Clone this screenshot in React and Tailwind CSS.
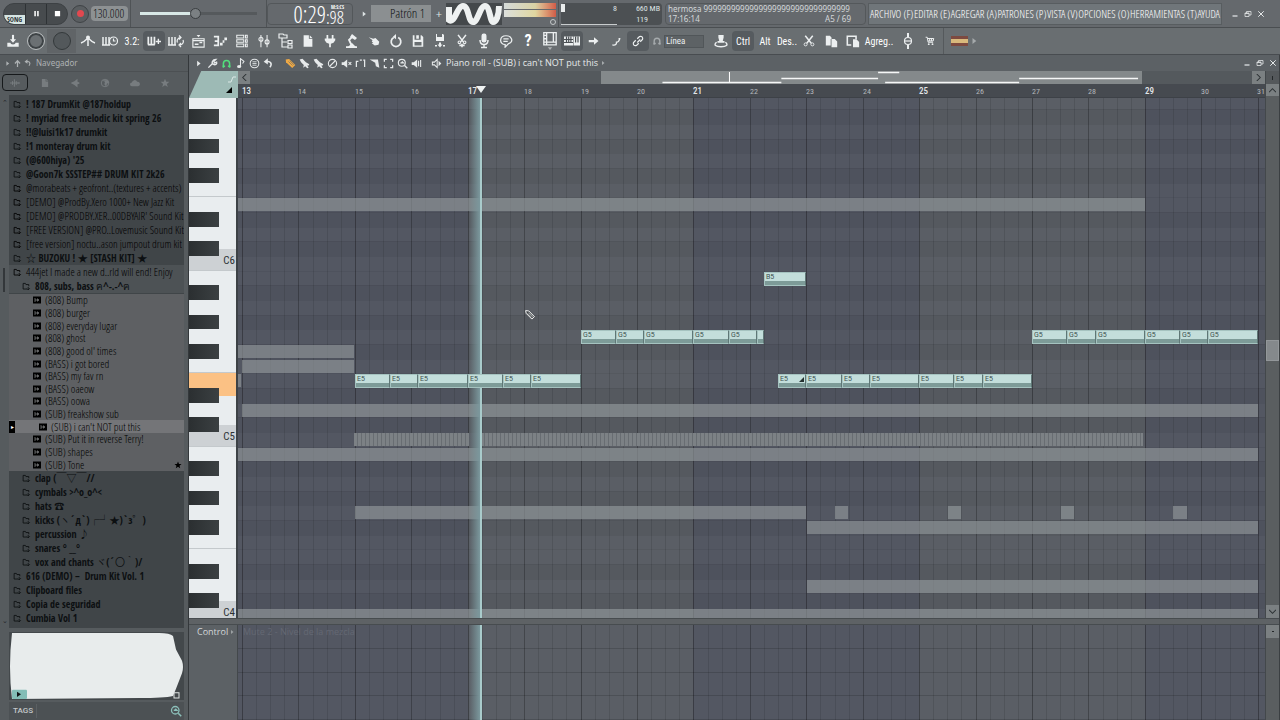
import React, { useState } from "react";
import clsx from "clsx";

const BAR = 56.43; // width of one bar in the grid
const FIRST_BAR = 13;
const GRID_LEFT = 4;

const barX = (bar) => Math.round(GRID_LEFT + (bar - FIRST_BAR) * BAR);
const stepX = (bar, step) => barX(bar + step / 16);
// row 0 is B5, rows count down the keyboard
const rowY = (row) => Math.round(172.7 + row * 14.667);

const rows = Array.from({ length: 36 }, (_, i) => i - 12);
const noteNames = ["B", "A#", "A", "G#", "G", "F#", "F", "E", "D#", "D", "C#", "C"];
const nameOf = (row) => noteNames[(row + 24) % 12];

function phrase(name, row, bar, end = 64) {
  const cuts = [0, 10, 18, 32, 42, 50, end];
  return cuts.slice(0, -1).map((from, i) => ({
    name,
    row,
    left: stepX(bar, from),
    right: stepX(bar, cuts[i + 1]),
  }));
}

const notes = [
  ...phrase("E5", 7, 15),
  ...phrase("G5", 4, 19, 50).slice(0, 5),
  { name: "", row: 4, left: 519, right: 526 },
  { name: "B5", row: 0, left: 526, right: barX(23) },
  { name: "E5", row: 7, left: barX(22.5), right: barX(23), slide: true },
  ...phrase("E5", 7, 23),
  ...phrase("G5", 4, 27),
];

const ghosts = [
  [-5, 0, 907],
  [5, 0, 116],
  [6, 4, 116],
  [7, 0, 3],
  [9, 4, 1020],
  [12, 0, 1020],
  [16, 117, 568],
  [16, 597, 610],
  [16, 710, 723],
  [16, 823, 836],
  [16, 935, 949],
  [17, 569, 1020],
  [21, 569, 1020],
  [23, 0, 1020],
];

const rolls = [
  [116, 231],
  [243, 905],
];

const folders = [
  "! 187 DrumKit @187holdup",
  "! myriad free melodic kit spring 26",
  "!!@luisi1k17 drumkit",
  "!1 monteray drum kit",
  "(@600hiya) '25",
  "@Goon7k SSSTEP## DRUM KIT 2k26",
  "@morabeats + geofront..(textures + accents)",
  "[DEMO] @ProdBy.Xero 1000+ New Jazz Kit",
  "[DEMO] @PRODBY.XER..00DBYAIR' Sound Kit",
  "[FREE VERSION] @PRO..Lovemusic Sound Kit",
  "[free version] noctu..ason jumpout drum kit",
  "☆ BUZOKU ! ★ [STASH KIT] ★",
];

const samples = [
  "(808) Bump",
  "(808) burger",
  "(808) everyday lugar",
  "(808) ghost",
  "(808) good ol' times",
  "(BASS) i got bored",
  "(BASS) my fav rn",
  "(BASS) oaeow",
  "(BASS) oowa",
  "(SUB) freakshow sub",
  "(SUB) i can't NOT put this",
  "(SUB) Put it in reverse Terry!",
  "(SUB) shapes",
  "(SUB) Tone",
];

const subfolders = [
  "clap (￣▽￣//",
  "cymbals >^o_o^<",
  "hats ☎",
  "kicks (ヽ´д`)┌┘★)`з゜)",
  "percussion ♪",
  'snares ° __°',
  "vox and chants ヾ(´〇｀)/",
];

const lastFolders = ["616 (DEMO) –  Drum Kit Vol. 1", "Clipboard files", "Copia de seguridad", "Cumbia Vol 1"];

const menus = [
  "ARCHIVO (F)",
  "EDITAR (E)",
  "AGREGAR (A)",
  "PATRONES (P)",
  "VISTA (V)",
  "OPCIONES (O)",
  "HERRAMIENTAS (T)",
  "AYUDA",
];

const narrow = "font-['Open_Sans_Condensed_Light','Noto_Sans_CJK_JP',sans-serif]";
const narrowBold = "font-['Open_Sans_Condensed','Noto_Sans_CJK_JP',sans-serif]";

const solid = { fill: "currentColor", stroke: "none" };

const icons = {
  tray: (
    <>
      <path d="M8 1v7" strokeWidth="2.4" />
      <path d="M4.500 6h7L8 10zM1.500 10h3.500a3 2 0 0 0 6 0h3.500v4.500h-13z" {...solid} />
    </>
  ),
  metronome: (
    <>
      <path d="M1 10c3-1 5-3 7-5 2 2 4 4 7 5M8 5v8" strokeWidth="1.500" />
      <circle cx="8" cy="4.500" r="2" {...solid} />
    </>
  ),
  pianoClock: (
    <>
      <path d="M1 4v8M4 4v8M7 4v8M0 12h8" strokeWidth="1.500" />
      <circle cx="11.500" cy="8" r="4" />
      <path d="M11.500 5.500V8h2" />
    </>
  ),
  pianoPlus: (
    <>
      <path d="M1.500 3v9M5 3v9M8.500 3v9M1 12h8" strokeWidth="2" />
      <path d="M10 8.500h6M13 5.500v6" strokeWidth="1.600" />
    </>
  ),
  pianoLoop: (
    <>
      <path d="M1 4v8M4 4v8M7 4v8M0 12h8" strokeWidth="1.500" />
      <path d="M9.500 9.500a3.500 3.500 0 0 1 3-5M15 7a3.500 3.500 0 0 1-3 5M11 2.500l2 2-2 2M13 10l-2 2 2 2" />
    </>
  ),
  stepEdit: (
    <>
      <path d="M2 5h12v9H2zM2 7h12" />
      <path d="M4 11h4M9 9h3" strokeWidth="1.600" />
      <path d="M6 1h4L8 3.500z" {...solid} />
    </>
  ),
  playlist: (
    <path d="M1 2h6v12H1v-2h4V9H2V7h3V4H1zM8 10h3v3H8zM11 7h2v3h-2zM13 4h3v3h-3z" {...solid} />
  ),
  rack: <path d="M2 1.500h8v3H2zM2 6.500h8v3H2zM2 11.500h8v3H2zM12 1.500h2v3h-2zM12 6.500h2v3h-2zM12 11.500h2v3h-2z" />,
  mixer: (
    <>
      <path d="M4.500 1v14M11.500 1v14" />
      <circle cx="4.500" cy="6" r="2.300" />
      <circle cx="11.500" cy="9" r="2.300" />
    </>
  ),
  tree: <path d="M1 1h4l1 1h3v3H1zM4 5v9h6M4 9h5M10 7.500h4v3h-4zM10 12h4v3h-4z" />,
  file: <path d="M3 1.500h6v4h4V14.500H3zM10 1.500l3 3h-3z" {...solid} />,
  plug: <path d="M4 1h2v4h4V1h2v4h2v2l-2 3-3 1v4H7v-4l-3-1-2-3V5h2z" {...solid} />,
  lamp: (
    <>
      <path d="M9 3L5 7l3 6M2 14.200h11" strokeWidth="1.800" />
      <path d="M8 1l5 4-2 2-5-3zM4 14l4-4 4 4z" {...solid} />
    </>
  ),
  hand: <path d="M1 3l6 2 3-1 5 5-1 4-5 1-4-3 2-1-2-1 1-2z" {...solid} />,
  restart: (
    <>
      <path d="M5.500 4a5.500 5.500 0 1 0 5 0" strokeWidth="2" />
      <path d="M8 0v6L4.500 3z" {...solid} />
    </>
  ),
  save: <path d="M2 1.500h2v5h7v-5h1l2 2v11H2zM6 1.500h3v4H6zM4 9v4h8V9z" fillRule="evenodd" {...solid} />,
  saveNew: <path d="M4 1h1v3h5V1h1l1 1v6H4zM7 9.500h2v2h1.500L8 14.500 5.500 11.500H7zM3 12h2v1.500H3zM11 12h2v1.500h-2z" {...solid} />,
  cutDown: (
    <>
      <path d="M3.500 1l6 8M12.500 1l-6 8M8 11v4M5 13h6" strokeWidth="1.800" />
      <circle cx="5" cy="9.500" r="1.500" />
      <circle cx="11" cy="9.500" r="1.500" />
    </>
  ),
  mic: (
    <>
      <rect x="5.500" y="0.500" width="5" height="9" rx="2.200" {...solid} />
      <path d="M4 7c0 6 8 6 8 0M8 11v3M5 14.500h6" strokeWidth="1.500" />
    </>
  ),
  chat: <path d="M8 2c-8 0-8 10-1 10v3l4-4c6-2 4-9-3-9zM5 5.500h6M5 8.500h5" strokeWidth="1.400" />,
  panels: (
    <>
      <path d="M2.500 .5h11v11h-11zM5 .5v11M5 9h8M2.500 3h2.500M2.500 6h2.500M2.500 9h2.500M11 .5v8" />
      <path d="M6 13.500h4L8 16z" fill="#b0b4b6" stroke="none" />
    </>
  ),
  keyboard: (
    <>
      <path d="M0 3.500h9v9H0zM9.500 3.500H16v9H9.500z" {...solid} />
      <path d="M0 6.500h9M0 9.500h9M2.500 3.500v6M4.700 3.500v6M6.900 3.500v6M11.600 3.500v6M14 3.500v6" stroke="#4b5054" />
    </>
  ),
  arrow: <path d="M1 6.500h7V3l6 5-6 5V9.500H1z" {...solid} />,
  curve: <path d="M2 13c5 1 6-1 6-4 3 0 4-2 5-6M12 3v2" strokeWidth="2" />,
  link: <path d="M7 10l4-4M7 5l3-3c3-1 5 1 4 4l-3 3M9 11l-3 3c-3 1-5-1-4-4l3-3" strokeWidth="1.600" />,
  magnet: <path d="M3.500 14V8a4.500 4.500 0 0 1 9 0v6M2 12h4M10 12h4" strokeWidth="2.200" />,
  stamp: (
    <>
      <path d="M5 1h6v3l-1 4h2v2H4V8h2L5 4z" {...solid} />
      <path d="M3 9.500c-4 3-1 5 5 5s9-2 5-5" strokeWidth="1.600" />
    </>
  ),
  scissors: (
    <>
      <path d="M3 1l8 10M13 1L5 11" strokeWidth="2" />
      <circle cx="3.500" cy="12.500" r="2" />
      <circle cx="12.500" cy="12.500" r="2" />
    </>
  ),
  copy: <path d="M1 1h5l2 2v2H7v8H1zM8 5h4l3 3v7H8z" {...solid} />,
  paste: (
    <>
      <path d="M6 12.500H1.500v-10h10V6M4 2.500h5" strokeWidth="1.800" />
      <path d="M8 6h4l3 3v6H8z" {...solid} />
    </>
  ),
  fader: (
    <>
      <path d="M8 0v4M8 12v4" strokeWidth="2" />
      <circle cx="8" cy="8" r="3.500" />
      <path d="M4 8h8" />
    </>
  ),
  cart: (
    <>
      <path d="M1 2h2.500l1.500 8h8M4 4h10l-1 4H5M7.500 4v4M10.500 4v4" strokeWidth="1.600" />
      <circle cx="6" cy="13" r="1.500" {...solid} />
      <circle cx="12" cy="13" r="1.500" {...solid} />
    </>
  ),
  play: <path d="M6 4l5 4-5 4z" {...solid} />,
  wrench: <path d="M2 14l6-6M13 2l-3 3 1 2 3-1c1 3-2 5-5 3-3-2-1-7 4-7z" strokeWidth="2" />,
  note: (
    <>
      <path d="M8 12V1l5 4-2 3" strokeWidth="1.600" />
      <ellipse cx="6" cy="12.500" rx="3" ry="2.200" {...solid} />
    </>
  ),
  stampList: (
    <>
      <circle cx="8" cy="8" r="6.300" strokeWidth="1.500" />
      <path d="M5 5.500h6M5 8h6M5 10.500h6" />
    </>
  ),
  undo: (
    <>
      <path d="M4 5.500c7-2 10 3 6 8" strokeWidth="2.200" />
      <path d="M1 5.500l6-5v9z" {...solid} />
    </>
  ),
  pencil: (
    <>
      <path d="M1 2l5-.5 9 8.500-4.500 4.500L1.500 6z" {...solid} />
      <path d="M5 5l6 6M7 4l6 6" stroke="#5c6165" strokeWidth=".8" />
    </>
  ),
  brush: <path d="M1 2l4-1 5 5 5 3-1 2-2 0 2 3-2 1-3-3-3 2 1-4-4-4z" {...solid} />,
  erase: (
    <>
      <circle cx="8" cy="8" r="6" strokeWidth="1.600" />
      <path d="M4 12l8-8" strokeWidth="1.600" />
    </>
  ),
  mute: (
    <>
      <path d="M1 6h3l5-4v12l-5-4H1z" {...solid} />
      <path d="M11 6l4 4M15 6l-4 4" strokeWidth="1.500" />
    </>
  ),
  slip: <path d="M2 13V5h3M7 3h3M12 3h2v10" strokeWidth="1.800" />,
  slice: <path d="M1 2h12l2 12-5-2-1-5zM10 3l4 4" {...solid} />,
  select: <path d="M5.500 2H2v3.500M10.500 2H14v3.500M5.500 14H2v-3.500M10.500 14H14v-3.500" strokeWidth="1.800" />,
  zoom: (
    <>
      <circle cx="7" cy="7" r="5" strokeWidth="1.700" />
      <path d="M11 11l4 4M5 7h4l-2-2" strokeWidth="2" />
    </>
  ),
  speaker: (
    <>
      <path d="M1 6h3l5-4v12l-5-4H1z" {...solid} />
      <path d="M11 4v8M14 3v10" strokeWidth="1.600" />
    </>
  ),
  speakerLine: (
    <>
      <path d="M2 6h3l4-4v12l-4-4H2z" strokeWidth="1.500" />
      <path d="M11 4l4 4-4 4z" {...solid} />
    </>
  ),
  up: <path d="M8 14V4M3.500 8L8 3l4.500 5" strokeWidth="2.200" />,
  wave: <path d="M0 8h16M4 5v6M7 2v12M10 5v6M13 7v2" strokeWidth="1.600" />,
  plugin: <path d="M1 8l6-3 5-4v5l3 1v2l-3 1v5l-5-4z" {...solid} />,
  globe: (
    <>
      <circle cx="8" cy="8" r="6" strokeWidth="1.500" />
      <path d="M3 4l5 2-1 4 3 4 1-5 4-2-3-4z" {...solid} />
    </>
  ),
  cloud: <path d="M3 13a3 3 0 0 1 0-6 4.500 4.500 0 0 1 8.500-1A3.500 3.500 0 0 1 13 13z" {...solid} />,
  star: <path d="M8 1l2 5h5l-4 3.500 1.500 5L8 11.500 3.500 14.500 5 9.500 1 6h5z" {...solid} />,
  folder: <path d="M9 12.500H2v-10h4l1 2h5v3M11 9v5M9 12l2 2 3-3" strokeWidth="1.500" />,
  sample: (
    <>
      <path d="M0 1h16v14H0z" {...solid} />
      <path d="M4 4v8M4 8h5M9 5.500v5l3-2.500z" stroke="#8f9193" strokeWidth="1.300" />
    </>
  ),
  min: <path d="M3 12h10" strokeWidth="2.500" />,
  restore: <path d="M2 6h8v7H2zM5 6V3h9v7h-4M2 7h8" strokeWidth="1.600" />,
  close: <path d="M2.500 2.500l11 11M13.500 2.500l-11 11" strokeWidth="2" />,
  pause: <path d="M3 2h3.500v12H3zM9.500 2H13v12H9.500z" {...solid} />,
  stop: <path d="M2 2h12v12H2z" {...solid} />,
};

function Icon({ name, className = "size-4" }) {
  return (
    <svg viewBox="0 0 16 16" className={clsx("shrink-0", className)} fill="none" stroke="currentColor" strokeWidth="1.2">
      {icons[name]}
    </svg>
  );
}

function ToolButton({ name, active, label, onClick, className = "size-4" }) {
  return (
    <button
      onClick={onClick}
      aria-label={label || name}
      className={clsx("flex h-5 w-[22px] shrink-0 items-center justify-center rounded-sm", active && "bg-[#565b5f]")}
    >
      <Icon name={name} className={className} />
    </button>
  );
}

function TextButton({ children, active, wide }) {
  return (
    <button
      className={clsx(
        "h-5 shrink-0 rounded-sm text-center font-['Roboto_Condensed',sans-serif] text-[10px] text-white",
        wide ? "w-[30px]" : "w-[22px]",
        active && "bg-[#565b5f]"
      )}
    >
      {children}
    </button>
  );
}

function WindowButtons({ className }) {
  return (
    <div className={clsx("flex shrink-0 items-center text-[#e3e6e7]", className)}>
      {["min", "restore", "close"].map((n) => (
        <button key={n} aria-label={n} className="flex w-[13px] justify-center">
          <Icon name={n} className="size-2" />
        </button>
      ))}
    </div>
  );
}

function TopBar() {
  const [tempo, setTempo] = useState("130.000");
  return (
    <header className="flex h-7 shrink-0 items-center border-b border-[#4a4e51] bg-[#65696d]">
      <div className="ml-[3px] flex h-[22px] w-[65px] shrink-0 overflow-hidden rounded-full border border-[#3d4144] bg-[#474b4e]">
        <button className="flex w-[21px] flex-col justify-end text-[#33383b]">
          <span className="bg-[#d5e4e2] text-center font-['Open_Sans_Condensed',sans-serif] text-[7px] leading-[9px] font-bold">SONG</span>
        </button>
        <button aria-label="Pausa" className="flex w-[22px] items-center justify-center border-x border-[#2e3235] text-white">
          <Icon name="pause" className="size-[7px]" />
        </button>
        <button aria-label="Detener" className="flex flex-1 items-center justify-center text-white">
          <Icon name="stop" className="size-[7px]" />
        </button>
      </div>
      <button aria-label="Grabar" className="ml-[3px] flex size-[18px] shrink-0 items-center justify-center rounded-full border border-[#3f4346] bg-[#5a5e61]">
        <span className="size-[7px] rounded-full bg-[#e2484f]" />
      </button>
      <input
        aria-label="Tempo"
        value={tempo}
        onChange={(e) => setTempo(e.target.value)}
        className="ml-[2px] h-[15px] w-[37px] shrink-0 rounded-sm bg-[#8d9193] px-[2px] text-[12px] leading-[15px] text-[#101315]"
      />
      <div className="ml-[2px] flex h-full w-[137px] shrink-0 items-center border-x border-[#4f5356] px-[9px]">
        <input
          type="range"
          aria-label="Volumen"
          defaultValue="47"
          className="h-[3px] w-full appearance-none bg-linear-to-r from-[#d8e8e6] from-47% to-[#55595c] to-47% [&::-webkit-slider-thumb]:size-[11px] [&::-webkit-slider-thumb]:appearance-none [&::-webkit-slider-thumb]:rounded-full [&::-webkit-slider-thumb]:border [&::-webkit-slider-thumb]:border-[#3a3e41] [&::-webkit-slider-thumb]:bg-[#7b8083]"
        />
      </div>
      <div className="flex h-[22px] w-[86px] shrink-0 items-start justify-end rounded-sm border border-[#53575a] pr-[8px] text-white">
        <span className="text-[23px] leading-5">0:29</span>
        <span className="flex flex-col items-end">
          <span className="h-[6px] font-['Open_Sans_Condensed',sans-serif] text-[5px] leading-[6px]">M:S:CS</span>
          <span className="text-[18px] leading-[14px]">:98</span>
        </span>
      </div>
      <div className="flex w-[92px] shrink-0 items-center justify-between pl-[6px] text-[#dde3e4]">
        <Icon name="play" className="size-[10px]" />
        <button className="h-[17px] w-[60px] bg-[#8b8f91] pr-[6px] text-right text-[13px] leading-[17px] text-[#101315]">Patrón 1</button>
        <button className="w-[12px] font-['Open_Sans',sans-serif] text-[11px] leading-3">+</button>
      </div>
      <svg viewBox="0 0 56 22" className="ml-px h-[22px] w-14 shrink-0 bg-[#44484b]">
        <path d="M3 4L3 17C9 21 11 3 17 3s5 16 10 16S34 3 39 3s5 16 8 16 6-6 6-16" fill="none" stroke="#eef1f1" strokeWidth="6" />
      </svg>
      <div className="ml-[2px] flex h-full w-[55px] shrink-0 flex-col border-r border-[#4f5356] pt-[3px] pr-[2px]">
        <div className="mb-px h-[6px] bg-linear-to-r from-[#d5dad9] via-[#d9d2a4] via-60% to-[#cf5b48]" />
        <div className="h-[7px] bg-linear-to-r from-[#dcdfdc] via-[#e0d7a0] via-60% to-[#cf5b48]" />
        <span className="mt-[2px] size-[6px] self-end rounded-full border border-[#c3c7c8]" />
      </div>
      <div className="ml-[2px] flex h-[22px] w-[101px] shrink-0 justify-between rounded-sm bg-[#4c5053] pr-[2px] font-['Roboto_Condensed',sans-serif] text-[8px] leading-[11px] text-[#dfe3e4]">
        <div className="flex w-[56px] justify-between border-b border-[#c8cccd]">
          <span className="mt-px h-2 w-1 bg-[#e9ecec]" />
          <span>8</span>
        </div>
        <div className="text-right">
          <p>660 MB</p>
          <p className="pr-3">119</p>
        </div>
      </div>
      <div className="ml-[3px] flex h-[22px] w-[201px] shrink-0 flex-col rounded-sm border border-[#54585b] px-[2px] font-['Noto_Sans',sans-serif] text-[8px] leading-[10px] text-[#d3d7d9]">
        <p className="whitespace-nowrap">hermosa 99999999999999999999999999999999</p>
        <p className="flex justify-between">
          <span>17:16:14</span>
          <span className="pr-3">A5 / 69</span>
        </p>
      </div>
      <nav className="ml-[2px] flex h-[22px] min-w-0 flex-1 items-center justify-between border border-[#585d60] bg-[#70767a] px-px text-[11px] leading-[14px] whitespace-nowrap text-white">
        {menus.map((m) => (
          <button key={m}>{m}</button>
        ))}
      </nav>
      <WindowButtons className="mr-[13px] ml-[6px]" />
    </header>
  );
}

function ToolBar() {
  const [snap, setSnap] = useState("Línea");
  return (
    <div className="flex h-[27px] shrink-0 items-center border-b border-[#484c50] bg-[#696e71] pl-[2px] text-[#eceff0]">
      <ToolButton name="tray" className="size-[14px]" />
      <button aria-label="Volumen maestro" className="flex w-[23px] shrink-0 justify-center">
        <span className="size-[16px] rounded-full border-2 border-[#3e4346] bg-[#6b7073] outline outline-[#b9bdbf]" />
      </button>
      <button aria-label="Tono maestro" className="flex h-6 w-[29px] shrink-0 items-center justify-center bg-[#606467]">
        <span className="size-[18px] rounded-full border border-[#34393b] bg-[#53585b]" />
      </button>
      <span className="w-[1px]" />
      <ToolButton name="metronome" />
      <ToolButton name="pianoClock" />
      <TextButton>3.2:</TextButton>
      <ToolButton name="pianoPlus" active className="size-[14px]" />
      <ToolButton name="pianoLoop" />
      <ToolButton name="stepEdit" className="size-[15px]" />
      <ToolButton name="playlist" className="size-[14px]" />
      <ToolButton name="rack" className="size-[14px]" />
      <ToolButton name="mixer" className="size-[14px]" />
      <ToolButton name="tree" />
      <ToolButton name="file" className="size-[14px]" />
      <ToolButton name="plug" className="size-[14px]" />
      <ToolButton name="lamp" />
      <ToolButton name="hand" className="size-3" />
      <ToolButton name="restart" className="size-[14px]" />
      <ToolButton name="save" className="size-[14px]" />
      <ToolButton name="saveNew" />
      <ToolButton name="cutDown" className="size-[14px]" />
      <ToolButton name="mic" />
      <ToolButton name="chat" className="size-[14px]" />
      <TextButton>
        <b className="text-[16px] leading-none">?</b>
      </TextButton>
      <ToolButton name="panels" className="size-[18px]" />
      <ToolButton name="keyboard" active />
      <ToolButton name="arrow" className="size-3" />
      <ToolButton name="curve" className="size-[11px]" />
      <ToolButton name="link" active className="size-3" />
      <span className="flex w-[15px] justify-center text-[#a6abad]">
        <Icon name="magnet" className="size-[10px]" />
      </span>
      <select
        aria-label="Ajuste"
        value={snap}
        onChange={(e) => setSnap(e.target.value)}
        className="mr-[6px] h-[13px] w-10 shrink-0 appearance-none border border-[#515659] bg-[#5d6265] px-px font-['Roboto_Condensed',sans-serif] text-[9px] leading-[11px]"
      >
        <option>Línea</option>
        <option>Celda</option>
      </select>
      <ToolButton name="stamp" className="size-[14px]" />
      <TextButton active>Ctrl</TextButton>
      <TextButton>Alt</TextButton>
      <TextButton>Des..</TextButton>
      <ToolButton name="scissors" className="size-3" />
      <ToolButton name="copy" className="size-[13px]" />
      <ToolButton name="paste" className="size-[14px]" />
      <TextButton wide>Agreg..</TextButton>
      <span className="w-[3px]" />
      <ToolButton name="fader" />
      <ToolButton name="cart" className="size-[10px]" />
      <span className="ml-[2px] h-full w-[8px] border-l border-[#55595c]" />
      <button aria-label="Idioma" className="flex items-center">
        <span className="h-[10px] w-[17px] border-y-3 border-[#7d4a40] bg-[#d9b97c]" />
        <Icon name="play" className="size-3 text-[#a5a9ab]" />
      </button>
    </div>
  );
}

function FolderRow({ children, nested, bright }) {
  // long names are set in the light cut so that they fit the column
  const long = typeof children === "string" && children.length > 37;
  return (
    <li>
      <button
        className={clsx(
          "flex h-[14px] w-full items-center gap-1 overflow-hidden text-left leading-[14px] whitespace-pre",
          nested ? "pl-[13px]" : "pl-1",
          bright && "bg-[#4d5255]",
          long ? clsx("text-[11px] text-black", narrow) : clsx("text-[10px]", narrowBold)
        )}
      >
        <Icon name="folder" className="size-[9px]" />
        {children}
      </button>
    </li>
  );
}

function Browser() {
  const [selected, setSelected] = useState(10);
  return (
    <aside className="flex w-[189px] shrink-0 flex-col border-r border-[#34383b] bg-[#565b5e]">
      <div className="flex h-4 shrink-0 items-center gap-px pl-[3px] text-[#aeb2b4]">
        <Icon name="play" className="size-[9px]" />
        <Icon name="up" className="size-[9px]" />
        <Icon name="undo" className="ml-px size-2" />
        <h2 className="ml-[3px] font-['Noto_Sans',sans-serif] text-[8px] leading-[14px]">Navegador</h2>
      </div>
      <div className="flex h-[24px] shrink-0 items-start border-t border-[#4c5053] pt-[2px] text-[#777c7f]">
        {["wave", "file", "plugin", "globe", "cloud", "star"].map((n, i) => (
          <button
            key={n}
            aria-label={n}
            className={clsx(
              "mx-[2px] flex h-[17px] w-[26px] items-center justify-center rounded",
              i === 0 && "border border-[#16191b]"
            )}
          >
            <Icon name={n} className="size-[10px]" />
          </button>
        ))}
      </div>
      <div className="flex min-h-0 flex-1">
        <div className="flex w-[9px] shrink-0 flex-col items-center justify-between py-1 text-[7px] leading-none text-[#23272a]">
          <span>⌃</span>
          <span className="mt-[162px] mb-auto ml-[3px] h-[24px] self-start border-l-2 border-[#33373a]" />
          <span>⌄</span>
        </div>
        <div className="min-w-0 flex-1 overflow-hidden bg-[#404548] pt-[2px]">
          <ul className="pb-px text-[#0c0f11]">
            {folders.map((f) => (
              <FolderRow key={f}>{f}</FolderRow>
            ))}
            <FolderRow bright>444jet I made a new d..rld will end! Enjoy</FolderRow>
            <FolderRow bright nested>
              808, subs, bass ฅ^-.-^ฅ
            </FolderRow>
          </ul>
          <ul className="flex h-[177px] flex-col bg-[#5e6063] text-[11px] text-black">
            {samples.map((s, i) => (
              <li key={s} className={clsx("flex min-h-0 flex-1", i === selected && "bg-[#747578]")}>
                <button onClick={() => setSelected(i)} className="flex w-full items-center gap-1 leading-[12px] whitespace-nowrap">
                  {i === selected && <span className="w-[6px] bg-black text-[6px] leading-[12px] text-white">▸</span>}
                  <Icon name="sample" className={clsx("size-2", i === selected ? "ml-5" : "ml-6")} />
                  {s}
                  {i === samples.length - 1 && <Icon name="star" className="mr-[2px] ml-auto size-2" />}
                </button>
              </li>
            ))}
          </ul>
          <ul className="text-[#0c0f11]">
            {subfolders.map((f) => (
              <FolderRow key={f} nested>
                {f}
              </FolderRow>
            ))}
            {lastFolders.map((f) => (
              <FolderRow key={f}>{f}</FolderRow>
            ))}
          </ul>
        </div>
        <div className="w-1 shrink-0" />
      </div>
      <div className="mt-1 mr-1 ml-[9px] flex h-[68px] shrink-0 flex-col bg-[#43484b]">
        <svg viewBox="0 0 175 66" preserveAspectRatio="none" className="h-full w-full">
          <path d="M3 1L150 1Q161 1 164 4L167 17 173 28Q175 34 173 40L167 55 164 62Q155 64 130 64L3 65Q-1 34 3 1z" fill="#e8ecec" />
          <rect x="3" y="56" width="15" height="9" rx="1" fill="#83bdb6" />
          <path d="M8 58l4 2.500-4 2.500z" fill="#101416" />
          <path d="M165 59h5v5h-5z" fill="none" stroke="#dfe3e3" />
        </svg>
      </div>
      <div className="mt-[2px] mr-1 ml-[9px] flex h-[18px] shrink-0 items-center bg-[#4c5154] text-[8px] text-[#c3c7c9]">
        <label htmlFor="tags" className="h-[14px] w-7 border-r border-[#5b6063] pl-1 font-['Roboto',sans-serif] leading-[13px] font-medium">
          TAGS
        </label>
        <input id="tags" className="h-[15px] min-w-0 flex-1" />
        <Icon name="zoom" className="mr-[2px] size-3 text-[#8cc0ba]" />
      </div>
    </aside>
  );
}

function PianoKeys() {
  const tone = (row) => {
    if (row === 7) return "bg-[#fbc184]";
    return nameOf(row) === "C" ? "bg-[#cdd1d4]" : "bg-[#e9edef]";
  };
  return (
    <div className="min-h-0 flex-1 overflow-hidden border-r-2 border-[#3d4246] bg-[#e9edef]">
      {rows.map((row) => {
        const height = rowY(row + 1) - Math.max(0, rowY(row));
        const name = nameOf(row);
        if (name.includes("#")) {
          return (
            <div key={row} className="flex" style={{ height }}>
              <div className="w-[30px] bg-linear-to-r from-[#2b2f31] to-[#3b4042]" />
              <div className="flex flex-1 flex-col">
                <div className={clsx("flex-1", tone(row - 1))} />
                <div className={clsx("flex-1", tone(row + 1))} />
              </div>
            </div>
          );
        }
        return (
          <div
            key={row}
            style={{ height }}
            className={clsx(
              "flex items-start justify-end pr-px font-['Roboto_Condensed',sans-serif] text-[11px] leading-[10px] text-[#2b3033]",
              tone(row),
              (name === "C" || name === "F") && "border-b border-[#c4c9cc]"
            )}
          >
            {name === "C" && <span>C{row < 0 ? 6 : row < 12 ? 5 : 4}</span>}
          </div>
        );
      })}
    </div>
  );
}

const bars = Array.from({ length: 19 }, (_, i) => FIRST_BAR + i);

// shading of alternate phrases plus the beat and bar lines
function GridLines() {
  return (
    <>
      {[17, 25].map((bar) => (
        <div key={bar} className="absolute inset-y-0 bg-[#5a5e65]" style={{ left: barX(bar), width: barX(bar + 4) - barX(bar) }} />
      ))}
      {bars.map((bar) =>
        [0, 0.25, 0.5, 0.75].map((beat) => (
          <div
            key={bar + beat}
            className={clsx("absolute inset-y-0 w-px", beat ? "bg-black/10" : bar % 2 ? "bg-black/30" : "bg-black/25")}
            style={{ left: barX(bar + beat) }}
          />
        ))
      )}
    </>
  );
}

function Playhead() {
  return <div className="absolute inset-y-0 left-[231px] w-[13px] border-r-2 border-[#a9cbcb] bg-linear-to-r from-transparent to-[#7b989d]" />;
}

function NoteGrid() {
  return (
    <div className="relative min-h-0 flex-1 overflow-hidden bg-[#535762]">
      <GridLines />
      {rows.map((row) => (
        <div
          key={row}
          className={clsx("absolute inset-x-0 border-t border-black/5", nameOf(row).includes("#") && "bg-black/5")}
          style={{ top: rowY(row), height: rowY(row + 1) - rowY(row) }}
        />
      ))}
      {ghosts.map(([row, left, right]) => (
        <div key={row + "-" + left} className="absolute h-[13px] bg-[#90969a]/65" style={{ top: rowY(row) + 1, left, width: right - left }} />
      ))}
      {rolls.map(([left, right]) => (
        <div
          key={left}
          className="absolute h-[13px] bg-[repeating-linear-gradient(90deg,#7c8185_0_3px,#686d72_3px_4px)]"
          style={{ top: rowY(11) + 1, left, width: right - left }}
        />
      ))}
      <Playhead />
      {notes.map((n) => (
        <div
          key={n.row + "-" + n.left}
          className="absolute h-[14px] border border-r-[#5f7776] border-[#a5c3c0] bg-linear-to-b from-[#c3dedb] from-66% to-[#7d9b98] to-66% pl-px font-['Roboto',sans-serif] text-[7px] leading-[8px] text-[#3e5251]"
          style={{ top: rowY(n.row) + 1, left: n.left, width: n.right - n.left }}
        >
          {n.name}
          {n.slide && <span className="absolute top-[2px] right-px size-[5px] bg-[#23302f] [clip-path:polygon(100%_0,100%_100%,0_100%)]" />}
        </div>
      ))}
      <svg viewBox="0 0 16 16" className="absolute top-[212px] left-[287px] size-[10px]">
        <path d="M1 1l5 .5 9 9-4 4-9-9z" fill="#3b4044" stroke="#fff" strokeWidth="1.500" />
        <path d="M4 5l7 7M6 4l7 7" stroke="#fff" />
      </svg>
    </div>
  );
}

function ScrollButton({ children, label, className }) {
  return (
    <button aria-label={label} className={clsx("flex shrink-0 items-center justify-center bg-[#7b8082] text-[#2e3336]", className)}>
      {children}
    </button>
  );
}

function Chevron({ className }) {
  return (
    <svg viewBox="0 0 8 8" className={clsx("size-[7px]", className)} fill="none" stroke="currentColor" strokeWidth="1.2">
      <path d="M6 0L2 4l4 4" />
    </svg>
  );
}

function PianoRoll() {
  return (
    <main className="flex min-w-0 flex-1 flex-col border-r border-[#3b3f42] bg-[#5c6165]">
      <div className="flex h-4 shrink-0 items-center pl-[2px] text-[#e6e9ea]">
        {["play", "wrench", "magnet", "note", "stampList", "undo"].map((n) => (
          <button key={n} aria-label={n} className={clsx("flex w-[14px] justify-center", n === "magnet" && "text-[#52e07c]")}>
            <Icon name={n} className="size-[11px]" />
          </button>
        ))}
        <span className="w-2" />
        {["pencil", "brush", "brush", "erase", "mute", "slip", "slice", "select", "zoom", "speaker"].map((n, i) => (
          <button key={i} aria-label={n} className={clsx("flex w-[14px] justify-center", n === "pencil" && "text-[#f0aa45]")}>
            <Icon name={n} className="size-[11px]" />
          </button>
        ))}
        <Icon name="speakerLine" className="ml-2 size-[11px]" />
        <h1 className="ml-[4px] font-['Open_Sans',sans-serif] text-[9px] leading-[14px] font-medium whitespace-nowrap">
          Piano roll - (SUB) i can't NOT put this
        </h1>
        <Icon name="play" className="ml-px size-2 text-[#a6abad]" />
        <WindowButtons className="ml-auto" />
      </div>

      <div className="flex min-h-0 flex-1">
        <div className="flex w-[49px] shrink-0 flex-col">
          <div className="relative h-[27px] shrink-0 bg-[#9dbab5] [clip-path:polygon(25%_0,100%_0,100%_100%,0_100%)]">
            <svg viewBox="0 0 8 8" className="absolute top-1 right-[2px] size-2" fill="none" stroke="#dbe8e6">
              <path d="M0 7h3l2-5h3" />
            </svg>
            <span className="absolute right-[6px] bottom-[5px] size-[6px] bg-black [clip-path:polygon(100%_0,100%_100%,0_100%)]" />
          </div>
          <PianoKeys />
        </div>
        <div className="flex min-w-0 flex-1 flex-col">
          <div className="flex h-[13px] shrink-0">
            <ScrollButton label="Izquierda" className="w-3">
              <Chevron />
            </ScrollButton>
            <div className="flex-1 bg-[#54595d]">
              <svg viewBox="0 0 537 13" preserveAspectRatio="none" className="ml-[35%] h-full w-[54%] bg-[#84898b]">
                <path d="M61 11.500h118M179 7.500h96M275 1.500h21M282 11.500h133M415 7.500h118" stroke="#f5f7f7" strokeWidth="1.500" />
                <path d="M127.500 1v10" stroke="#fff" />
              </svg>
            </div>
            <ScrollButton label="Derecha" className="w-[13px]">
              <Chevron className="rotate-180" />
            </ScrollButton>
          </div>
          <div className="relative h-[14px] shrink-0 overflow-hidden border-b border-[#3d4147] bg-[#464a50]">
            {bars.map((bar) => (
              <span
                key={bar}
                className={clsx(
                  "absolute top-0 font-['Roboto_Condensed',sans-serif] leading-[15px]",
                  bar % 4 === 1 ? "text-[9px] font-medium text-[#e3e6e8]" : "text-[8px] text-[#b4b8bb]"
                )}
                style={{ left: bar === 31 ? barX(bar) - 1 : barX(bar) }}
              >
                {bar}
              </span>
            ))}
            <span className="absolute top-[2px] left-[238px] h-[7px] w-[10px] bg-[#eef2f2] [clip-path:polygon(0_0,100%_0,50%_100%)]" />
          </div>
          <NoteGrid />
        </div>
        <div className="flex w-[14px] shrink-0 flex-col border-l border-[#43484b] bg-[#5a5e60]">
          <ScrollButton label="Zoom" className="h-[13px] bg-[#54585b]">
            <span className="h-1 w-px bg-[#24282a]" />
          </ScrollButton>
          <ScrollButton label="Arriba" className="h-3">
            <Chevron className="rotate-90" />
          </ScrollButton>
          <div className="flex flex-1 flex-col">
            <div className="grow" />
            <div className="h-[21px] border border-[#93979a] bg-[#85898c]" />
            <div className="grow" />
          </div>
          <ScrollButton label="Abajo" className="h-[13px]">
            <Chevron className="-rotate-90" />
          </ScrollButton>
        </div>
      </div>

      <div className="h-[7px] shrink-0 border-y border-[#474c4f] bg-[#5e6265]" />
      <div className="flex h-[95px] shrink-0">
        <div className="w-[49px] shrink-0 border-r border-[#43484b] pl-2">
          <button className="flex items-center font-['Open_Sans',sans-serif] text-[9px] leading-[13px] font-medium text-[#d3d7d9]">
            Control
            <Icon name="play" className="size-2 text-[#9ca1a3]" />
          </button>
        </div>
        <div className="relative min-w-0 flex-1 overflow-hidden bg-[#535762]">
          <GridLines />
          {[23, 47, 70, 94].map((y) => (
            <div key={y} className="absolute inset-x-0 h-px bg-black/15" style={{ top: y }} />
          ))}
          <p className="absolute top-0 left-[5px] font-['Open_Sans',sans-serif] text-[9px] leading-[13px] text-[#646873]">
            Mute 2 - Nivel de la mezcla
          </p>
          <Playhead />
        </div>
        <div className="w-[14px] shrink-0 border-l border-[#43484b] bg-[#5a5e60]">
          <ScrollButton label="Menos" className="h-[13px] w-full">
            <span className="h-px w-[2px] bg-[#24282a]" />
          </ScrollButton>
        </div>
      </div>
    </main>
  );
}

export default function App() {
  return (
    <div className={clsx("flex h-screen flex-col overflow-hidden bg-[#5c6165] select-none", narrow)}>
      <TopBar />
      <ToolBar />
      <div className="flex min-h-0 flex-1">
        <Browser />
        <PianoRoll />
      </div>
    </div>
  );
}
